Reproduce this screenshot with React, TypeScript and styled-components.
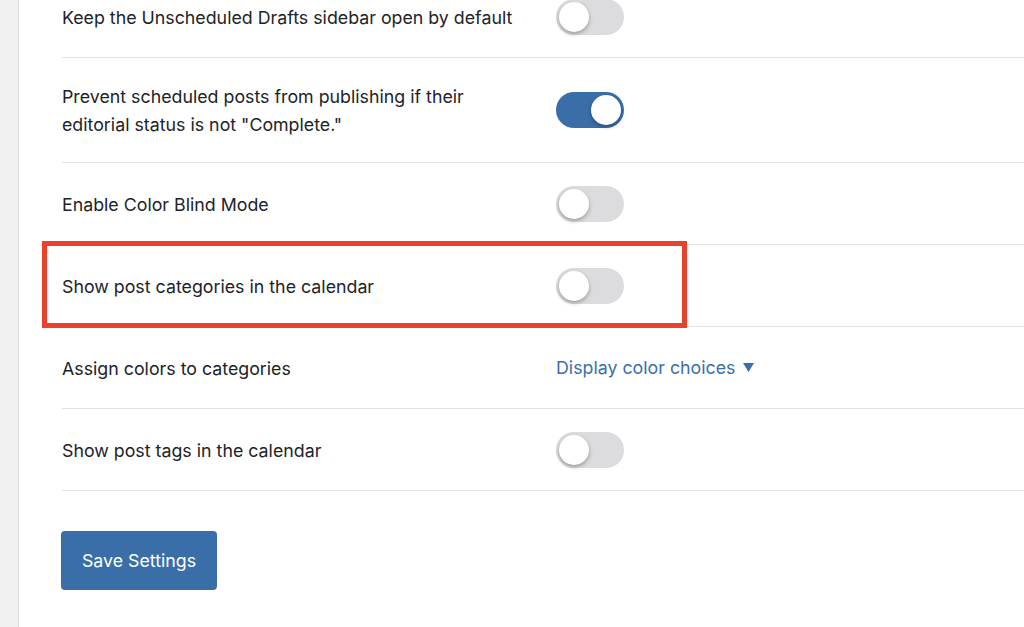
import React, {useState} from 'react';
import styled, {createGlobalStyle} from 'styled-components';

const GlobalStyle = createGlobalStyle`
    html, body {
        margin: 0;
        padding: 0;
        background: #ffffff;
        overflow: hidden;
    }
    body {
        font-family: Inter, "Noto Sans", "Liberation Sans", sans-serif;
        color: #1d2327;
    }
`;

type Setting = {
    id: string;
    label: string;
    kind: 'toggle' | 'link';
    on?: boolean;
    highlight?: boolean;
};

const SETTINGS: Setting[] = [
    {id: 'drafts', label: 'Keep the Unscheduled Drafts sidebar open by default', kind: 'toggle', on: false},
    {id: 'prevent', label: 'Prevent scheduled posts from publishing if their editorial status is not "Complete."', kind: 'toggle', on: true},
    {id: 'colorblind', label: 'Enable Color Blind Mode', kind: 'toggle', on: false},
    {id: 'categories', label: 'Show post categories in the calendar', kind: 'toggle', on: false, highlight: true},
    {id: 'colors', label: 'Assign colors to categories', kind: 'link'},
    {id: 'tags', label: 'Show post tags in the calendar', kind: 'toggle', on: false},
];

const Toggle = ({on, onClick}: {on: boolean; onClick: () => void}) => (
    <Track $on={on} onClick={onClick} role="switch" aria-checked={on}>
        <Knob $on={on} />
    </Track>
);

const App = () => {
    const [values, setValues] = useState<{[key: string]: boolean}>(() =>
        Object.fromEntries(SETTINGS.map((s) => [s.id, !!s.on]))
    );

    const flip = (id: string) => setValues((v) => ({...v, [id]: !v[id]}));

    return (
        <Page>
            <GlobalStyle />
            <Sidebar />
            <Content>
                <SettingsList>
                    {SETTINGS.map((s) => (
                        <Row key={s.id}>
                            <Label>{s.label}</Label>
                            <Control>
                                {s.kind === 'toggle' ? (
                                    <Toggle on={values[s.id]} onClick={() => flip(s.id)} />
                                ) : (
                                    <ChoicesLink href="#">
                                        Display color choices
                                        <svg width="11" height="9" viewBox="0 0 11 9">
                                            <polygon points="0,0 11,0 5.5,9" fill="currentColor" />
                                        </svg>
                                    </ChoicesLink>
                                )}
                            </Control>
                            {s.highlight && <Highlight />}
                        </Row>
                    ))}
                </SettingsList>
                <SaveButton type="button">Save Settings</SaveButton>
            </Content>
        </Page>
    );
};

export default App;


const Page = styled.div`
    display: flex;
    width: 1024px;
    height: 627px;
    overflow: hidden;
`;

const Sidebar = styled.div`
    flex: 0 0 18px;
    background: #f0f0f1;
    border-right: 1px solid #dcdcde;
`;

// the list is scrolled a little: the first row's top is cut off
const Content = styled.div`
    flex: 1;
    padding-left: 43px;
    margin-top: -24px;
`;

const SettingsList = styled.div`
    display: flex;
    flex-direction: column;
`;

const Row = styled.div`
    position: relative;
    display: grid;
    grid-template-columns: 494px 1fr;
    align-items: center;
    box-sizing: border-box;
    min-height: 82px;
    padding: 22px 0;
    border-bottom: 1px solid #e2e2e4;
`;

const Label = styled.div`
    width: 456px;
    padding: 3px 0 1px;
    font-size: 17.8px;
    line-height: 28px;
    color: #1d2327;
`;

const Control = styled.div`
    display: flex;
    align-items: center;
`;

const Track = styled.button<{$on: boolean}>`
    position: relative;
    width: 68px;
    height: 36px;
    padding: 0;
    border: none;
    border-radius: 18px;
    background: ${props => props.$on ? '#3a6ea9' : '#dcdcde'};
    cursor: pointer;
`;

const Knob = styled.span<{$on: boolean}>`
    position: absolute;
    top: 3px;
    left: ${props => props.$on ? '35px' : '3px'};
    width: 30px;
    height: 30px;
    border-radius: 50%;
    background: #ffffff;
    box-shadow: 0 2px 4px rgba(0, 0, 0, 0.3);
`;

const ChoicesLink = styled.a`
    display: inline-flex;
    align-items: center;
    gap: 8px;
    font-size: 17.8px;
    line-height: 28px;
    color: #3a6fad;
    text-decoration: none;
`;

const Highlight = styled.div`
    position: absolute;
    left: -20px;
    top: -4px;
    width: 645px;
    height: 87px;
    box-sizing: border-box;
    border: 5px solid #e9412b;
    pointer-events: none;
`;

const SaveButton = styled.button`
    margin-top: 40px;
    margin-left: -1px;
    width: 156px;
    height: 59px;
    border: none;
    border-radius: 4px;
    background: #3a6ea9;
    color: #ffffff;
    font-family: inherit;
    font-size: 17.8px;
    cursor: pointer;
`;
